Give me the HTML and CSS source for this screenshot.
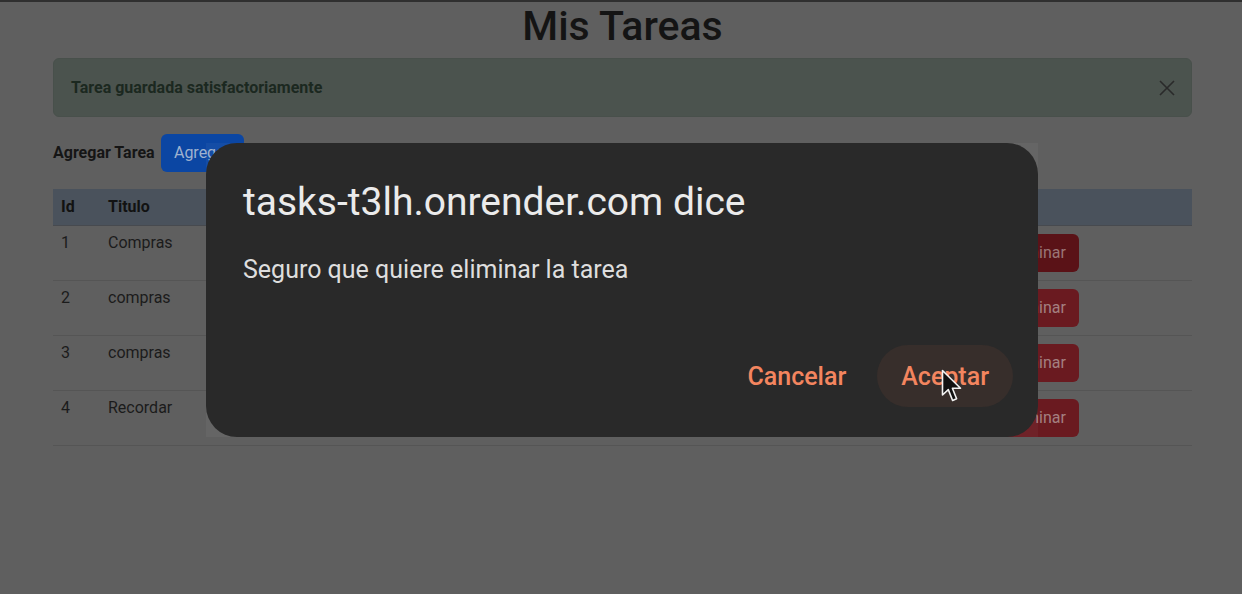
FILE: index.html
```html
<!DOCTYPE html>
<html lang="es">
<head>
<meta charset="utf-8">
<title>Mis Tareas</title>
<link rel="stylesheet" href="styles.css">
</head>
<body>
<div class="topline"></div>
<main class="container">
  <h1 class="title">Mis Tareas</h1>
  <div class="alert">
    <span>Tarea guardada satisfactoriamente</span>
    <svg class="close" width="16" height="16" viewBox="0 0 16 16"><path d="M1 1L15 15M15 1L1 15" stroke="#2a2a2a" stroke-width="1.6" fill="none"/></svg>
  </div>
  <div class="add-row">
    <span class="add-label">Agregar Tarea</span>
    <button class="btn btn-blue">Agregar</button>
  </div>
  <table class="tasks">
    <thead>
      <tr><th class="c-id">Id</th><th class="c-title">Titulo</th><th class="c-desc">Descripcion</th><th class="c-act">Acciones</th></tr>
    </thead>
    <tbody>
      <tr><td class="txt">1</td><td class="txt">Compras</td><td class="txt">Comprar pan</td><td><div class="acts"><button class="btn btn-edit">Editar</button><button class="btn btn-red btn-red-active">Eliminar</button></div></td></tr>
      <tr><td class="txt">2</td><td class="txt">compras</td><td class="txt">leche</td><td><div class="acts"><button class="btn btn-edit">Editar</button><button class="btn btn-red">Eliminar</button></div></td></tr>
      <tr><td class="txt">3</td><td class="txt">compras</td><td class="txt">huevos</td><td><div class="acts"><button class="btn btn-edit">Editar</button><button class="btn btn-red">Eliminar</button></div></td></tr>
      <tr><td class="txt">4</td><td class="txt">Recordar</td><td class="txt">llamar</td><td><div class="acts"><button class="btn btn-edit">Editar</button><button class="btn btn-red">Eliminar</button></div></td></tr>
    </tbody>
  </table>
</main>

<div class="dialog-frame">
  <div class="dialog">
    <div class="dlg-title">tasks-t3lh.onrender.com dice</div>
    <div class="dlg-msg">Seguro que quiere eliminar la tarea</div>
    <div class="dlg-actions">
      <button class="dlg-btn">Cancelar</button>
      <button class="dlg-btn dlg-btn-hover">Aceptar</button>
    </div>
  </div>
</div>

<svg class="cursor" width="22" height="35" viewBox="0 0 22 35">
  <path d="M1.5 1.5 L1.5 26 L7.3 20.6 L11.6 31.5 L15.6 29.8 L11.4 19.2 L19.5 19.2 Z" fill="#111" stroke="#f2f2f2" stroke-width="1.6" stroke-linejoin="round"/>
</svg>
</body>
</html>
```
FILE: styles.css
```css
html, body {
  margin: 0;
  padding: 0;
}
body {
  background: #5f5f5f;
  font-family: Roboto, "Liberation Sans", sans-serif;
  color: #161616;
  font-size: 16px;
  line-height: 24px;
  height: 594px;
  overflow: hidden;
  position: relative;
}
.topline {
  height: 2px;
  background: #2f2f2f;
}
.container {
  width: 1139px;
  margin-left: 53px;
}
.title {
  margin: 0 0 8px 0;
  font-size: 41px;
  line-height: 48px;
  font-weight: 500;
  text-align: center;
  color: #141414;
}
.alert {
  height: 59px;
  box-sizing: border-box;
  border: 1px solid #48504b;
  border-radius: 6px;
  background: #4b534e;
  display: flex;
  align-items: center;
  justify-content: space-between;
  padding: 0 16px 0 17px;
  font-weight: 700;
  color: #1b2820;
  margin-bottom: 17px;
  margin-top: 1px;
}
.add-row {
  display: flex;
  align-items: center;
  gap: 6px;
}
.add-label {
  font-weight: 700;
  color: #151515;
}
.btn {
  font-family: Roboto, "Liberation Sans", sans-serif;
  font-size: 16px;
  line-height: 24px;
  height: 38px;
  padding: 6px 12px;
  border: none;
  border-radius: 6px;
  box-sizing: border-box;
}
.btn-blue {
  background: #0b46a3;
  color: #9fb2cf;
  width: 83px;
}
.tasks {
  margin-top: 17px;
  width: 100%;
  border-collapse: collapse;
  table-layout: fixed;
}
.tasks th {
  background: #4a525c;
  text-align: left;
  font-weight: 700;
  color: #121212;
  height: 36px;
  padding: 0 8px;
  border-bottom: 1px solid #474a4f;
}
.tasks td {
  vertical-align: top;
  padding: 8px 8px 8px 8px;
  height: 38px;
  border-bottom: 1px solid #555555;
  color: #1b1b1b;
}
.tasks td.txt {
  padding-top: 5px;
}
.c-id { width: 31px; }
.c-title { width: 260px; }
.c-desc { width: 495px; }
.acts {
  display: flex;
  gap: 4px;
}
.btn-edit {
  background: #0a3f8e;
  color: #8ea3c4;
  width: 96px;
}
.btn-red {
  background: #6a1a20;
  color: #a48080;
  width: 84px;
}
.btn-red-active {
  background: #5a1217;
  color: #9a7676;
}

.dialog-frame {
  position: absolute;
  left: 206px;
  top: 143px;
  width: 832px;
  height: 294px;
  background: rgba(255, 255, 255, 0.04);
}
.dialog {
  height: 100%;
  box-sizing: border-box;
  background: #292929;
  border-radius: 31px;
  padding: 36px 25px 30px 37px;
  display: flex;
  flex-direction: column;
}
.dlg-title {
  font-size: 39px;
  line-height: 46px;
  color: #ebebeb;
}
.dlg-msg {
  margin-top: 29px;
  font-size: 25px;
  line-height: 32px;
  color: #dedede;
}
.dlg-actions {
  margin-top: auto;
  display: flex;
  justify-content: flex-end;
  gap: 7px;
}
.dlg-btn {
  font-family: Roboto, "Liberation Sans", sans-serif;
  font-size: 25px;
  font-weight: 500;
  color: #f3855f;
  background: transparent;
  border: none;
  height: 62px;
  padding: 0 24px;
  border-radius: 31px;
}
.dlg-btn-hover {
  background: #372e2b;
}
.cursor {
  position: absolute;
  left: 941px;
  top: 369px;
}
```
